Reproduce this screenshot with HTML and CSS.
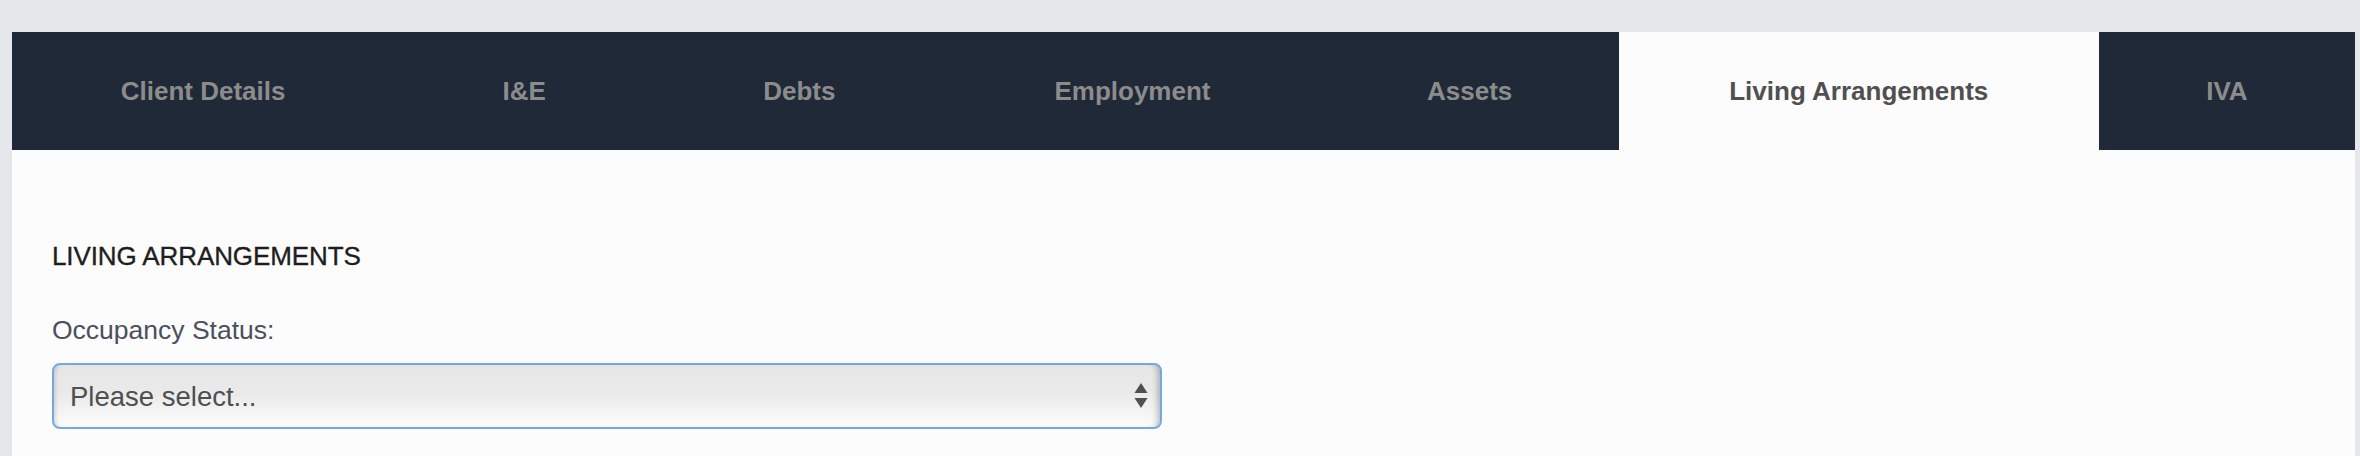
FILE: index.html
```html
<!DOCTYPE html>
<html lang="en">
<head>
<meta charset="utf-8">
<title>Living Arrangements</title>
<link rel="stylesheet" href="styles.css">
</head>
<body>
<div class="page">
  <div class="panel">
    <nav class="tabs">
      <a class="tab">Client Details</a>
      <a class="tab">I&amp;E</a>
      <a class="tab">Debts</a>
      <a class="tab">Employment</a>
      <a class="tab">Assets</a>
      <a class="tab tab-active">Living Arrangements</a>
      <a class="tab">IVA</a>
    </nav>
    <section class="content">
      <h2 class="heading">LIVING ARRANGEMENTS</h2>
      <label class="label" for="occ">Occupancy Status:</label>
      <div class="select-wrap">
        <select id="occ" class="select">
          <option>Please select...</option>
        </select>
        <svg class="select-arrows" width="14" height="26" viewBox="0 0 14 26" aria-hidden="true">
          <polygon points="7,0 13.5,10 0.5,10" fill="#505050"/>
          <polygon points="0.5,15 13.5,15 7,25" fill="#505050"/>
        </svg>
      </div>
    </section>
  </div>
</div>
</body>
</html>
```
FILE: styles.css
```css
html, body {
  margin: 0;
  padding: 0;
}
body {
  background: #e5e7eb;
  font-family: "Liberation Sans", Arial, Helvetica, sans-serif;
  width: 2360px;
  height: 456px;
  overflow: hidden;
}
.page {
  padding: 32px 5px 0 12px;
  height: 424px;
}
.panel {
  background: #fcfcfc;
  height: 100%;
  display: flex;
  flex-direction: column;
}
.tabs {
  display: grid;
  grid-template-columns: 382fr 260fr 290fr 376fr 298fr 480fr 256fr;
  height: 118px;
  background: #1f2937;
}
.tab {
  display: flex;
  align-items: center;
  justify-content: center;
  font-size: 26px;
  font-weight: bold;
  color: #8c8c8c;
  white-space: nowrap;
}
.tab-active {
  background: #fcfcfc;
  color: #505050;
}
.content {
  padding: 91px 40px 0 40px;
  display: flex;
  flex-direction: column;
  align-items: flex-start;
}
.heading {
  margin: 0;
  font-size: 26px;
  line-height: 30px;
  font-weight: normal;
  color: #1e1e1e;
  letter-spacing: -0.1px;
  -webkit-text-stroke: 0.35px #1e1e1e;
}
.label {
  margin-top: 44px;
  font-size: 26.5px;
  line-height: 30px;
  color: #4a505c;
}
.select-wrap {
  position: relative;
  margin-top: 18px;
  width: 1110px;
  height: 66px;
}
.select {
  appearance: none;
  -webkit-appearance: none;
  width: 100%;
  height: 100%;
  box-sizing: border-box;
  border: 2px solid #74a8e3;
  border-radius: 8px;
  padding: 0 50px 0 16px;
  font-family: "Liberation Sans", Arial, Helvetica, sans-serif;
  font-size: 27.5px;
  color: #4f4f4f;
  background: linear-gradient(#e6e6e6 0%, #eaeaea 45%, #fcfcfc 100%);
  box-shadow: inset 5px 0 5px -4px rgba(0, 0, 0, 0.18), inset -7px 0 6px -5px rgba(0, 0, 0, 0.28);
  outline: none;
}
.select-arrows {
  position: absolute;
  right: 14px;
  top: 20px;
  pointer-events: none;
}
```
